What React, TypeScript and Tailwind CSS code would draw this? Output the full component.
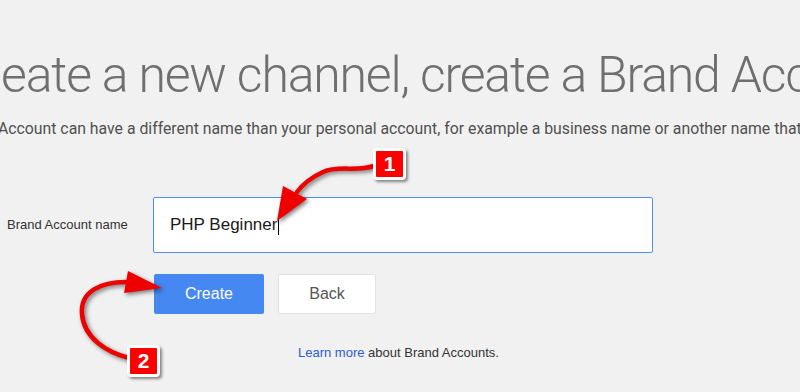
import React from 'react'

function Badge({ n, className }: { n: string; className: string }) {
  return (
    <div
      className={`absolute flex h-[32px] w-[33px] items-center justify-center rounded-[4px] border-[3px] border-white bg-[#ff0000] text-[21px] font-bold text-white shadow-[2px_2px_3px_rgba(0,0,0,0.45)] ${className}`}
      style={{ fontFamily: '"Liberation Sans", Arial, sans-serif' }}
    >
      {n}
    </div>
  )
}

export default function App() {
  return (
    <div
      className="relative h-[392px] w-[800px] overflow-hidden bg-[#f1f1f1]"
      style={{ fontFamily: '"Liberation Sans", Arial, sans-serif' }}
    >
      {/* heading */}
      <div
        className="whitespace-nowrap pt-[50px] pl-[1px] text-[50px] font-light leading-none tracking-[-1.2px] text-[#6f6f6f]"
        style={{ fontFamily: '"Roboto Light", Roboto, "Noto Sans", sans-serif' }}
      >
        eate a new channel, create a Brand Account
      </div>

      {/* description */}
      <div
        className="mt-[19px] -ml-[2px] whitespace-nowrap text-[15.8px] leading-[20px] text-[#505050]"
        style={{ fontFamily: 'Roboto, "Noto Sans", sans-serif' }}
      >
        Account can have a different name than your personal account, for example a business name or another name that you choose.
      </div>

      {/* name field */}
      <div className="mt-[58px] flex items-center pl-[7px]">
        <label className="w-[146px] text-[13px] text-[#333]">Brand Account name</label>
        <div className="flex h-[56px] w-[500px] items-center rounded-[2px] border border-[#4d8ff5] bg-white pl-[16px] text-[17px] text-[#1a1a1a]">
          PHP Beginner
          <span className="ml-[1px] h-[20px] w-px bg-black" />
        </div>
      </div>

      {/* buttons */}
      <div className="mt-[21px] flex gap-[14px] pl-[154px]">
        <button className="h-[40px] w-[110px] rounded-[2px] bg-[#4688f1] text-[16px] text-white">
          Create
        </button>
        <button className="h-[40px] w-[98px] rounded-[2px] border border-[#e2e2e2] bg-white text-[16px] text-[#555]">
          Back
        </button>
      </div>

      <p className="mt-[29px] pl-[298px] text-[13px] text-[#333]">
        <span className="text-[#2a5bd7]">Learn more</span> about Brand Accounts.
      </p>

      {/* annotations */}
      <svg
        className="pointer-events-none absolute inset-0 drop-shadow-[2px_2px_2px_rgba(0,0,0,0.5)]"
        width="800"
        height="392"
        viewBox="0 0 800 392"
      >
        <path
          d="M374 166 C356 172 338 165 323 172 C312 177 303 184 297 192"
          fill="none"
          stroke="#ee0000"
          strokeWidth="4.5"
          strokeLinecap="round"
        />
        <polygon points="283,186 307,199 277,221" fill="#ee0000" />
        <path
          d="M129 358 C106 352 84 338 82 314 C80 292 100 281 130 282"
          fill="none"
          stroke="#ee0000"
          strokeWidth="4.5"
          strokeLinecap="round"
        />
        <polygon points="128,271 162,288 124,293" fill="#ee0000" />
      </svg>
      <Badge n="1" className="left-[373px] top-[148px]" />
      <Badge n="2" className="left-[127px] top-[345px]" />
    </div>
  )
}
